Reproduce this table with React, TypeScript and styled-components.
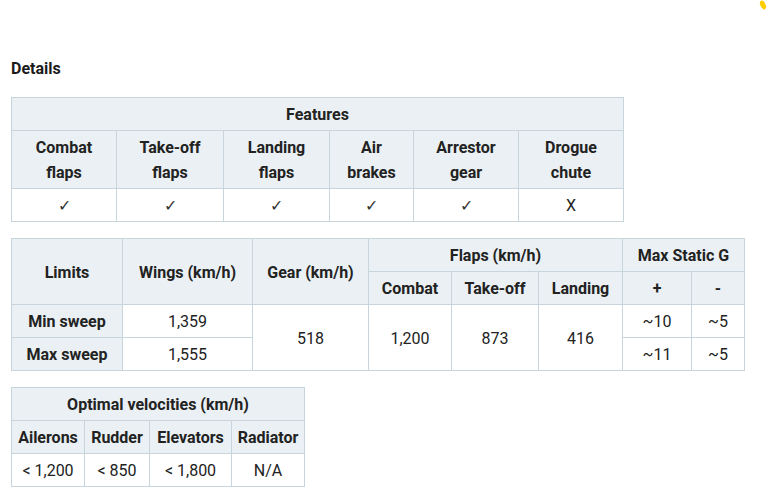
import styled, { createGlobalStyle } from "styled-components";

const GlobalStyle = createGlobalStyle`
  html, body {
    margin: 0;
    padding: 0;
    background: #ffffff;
  }
  body {
    font-family: Roboto, "Liberation Sans", sans-serif;
    color: #222222;
  }
`;

const features = [
  ["Combat", "flaps"],
  ["Take-off", "flaps"],
  ["Landing", "flaps"],
  ["Air", "brakes"],
  ["Arrestor", "gear"],
  ["Drogue", "chute"],
];

const featureValues = ["✓", "✓", "✓", "✓", "✓", "X"];

const velocities = [
  { title: "Ailerons", value: "< 1,200" },
  { title: "Rudder", value: "< 850" },
  { title: "Elevators", value: "< 1,800" },
  { title: "Radiator", value: "N/A" },
];

function App() {
  return (
    <Page>
      <GlobalStyle />
      <Blob viewBox="0 0 10 12" aria-hidden>
        <ellipse cx="5" cy="6" rx="2.6" ry="4.6" transform="rotate(-25 5 6)" fill="#ffcc00" />
      </Blob>
      <Heading>Details</Heading>

      <Table>
        <colgroup>
          {[105, 107, 106, 84, 105, 105].map((w, i) => (
            <col key={i} style={{ width: w }} />
          ))}
        </colgroup>
        <thead>
          <tr>
            <Th colSpan={6}>Features</Th>
          </tr>
          <tr>
            {features.map(([a, b]) => (
              <Th key={a}>
                {a}
                <br />
                {b}
              </Th>
            ))}
          </tr>
        </thead>
        <tbody>
          <tr>
            {featureValues.map((v, i) => (
              <Td key={i} $mark={v === "✓"}>
                {v}
              </Td>
            ))}
          </tr>
        </tbody>
      </Table>

      <Table>
        <colgroup>
          {[111, 130, 116, 83, 87, 84, 69, 53].map((w, i) => (
            <col key={i} style={{ width: w }} />
          ))}
        </colgroup>
        <thead>
          <tr>
            <Th rowSpan={2}>Limits</Th>
            <Th rowSpan={2}>Wings (km/h)</Th>
            <Th rowSpan={2}>Gear (km/h)</Th>
            <Th colSpan={3}>Flaps (km/h)</Th>
            <Th colSpan={2}>Max Static G</Th>
          </tr>
          <tr>
            <Th>Combat</Th>
            <Th>Take-off</Th>
            <Th>Landing</Th>
            <Th>+</Th>
            <Th>-</Th>
          </tr>
        </thead>
        <tbody>
          <tr>
            <Th>Min sweep</Th>
            <Td>1,359</Td>
            <Td rowSpan={2}>518</Td>
            <Td rowSpan={2}>1,200</Td>
            <Td rowSpan={2}>873</Td>
            <Td rowSpan={2}>416</Td>
            <Td>~10</Td>
            <Td>~5</Td>
          </tr>
          <tr>
            <Th>Max sweep</Th>
            <Td>1,555</Td>
            <Td>~11</Td>
            <Td>~5</Td>
          </tr>
        </tbody>
      </Table>

      <Table>
        <colgroup>
          {[73, 65, 82, 73].map((w, i) => (
            <col key={i} style={{ width: w }} />
          ))}
        </colgroup>
        <thead>
          <tr>
            <Th colSpan={4}>Optimal velocities (km/h)</Th>
          </tr>
          <tr>
            {velocities.map((v) => (
              <Th key={v.title}>{v.title}</Th>
            ))}
          </tr>
        </thead>
        <tbody>
          <tr>
            {velocities.map((v) => (
              <Td key={v.title}>{v.value}</Td>
            ))}
          </tr>
        </tbody>
      </Table>
    </Page>
  );
}

const Page = styled.main`
  position: relative;
  width: 770px;
  height: 499px;
  box-sizing: border-box;
  padding: 59px 0 0 11px;
  overflow: hidden;
`;

const Blob = styled.svg`
  position: absolute;
  top: -1px;
  right: 2px;
  width: 10px;
  height: 12px;
`;

const Heading = styled.h3`
  margin: 0 0 18px;
  font-size: 16px;
  font-weight: 700;
  line-height: 20px;
  color: #1b1b1b;
`;

const Table = styled.table`
  border-collapse: collapse;
  table-layout: fixed;
  border: 1px solid #c8d5dc;
  margin: 0 0 16px;
  font-size: 16px;
  line-height: 25px;
  color: #222222;
`;

const Th = styled.th`
  background: #eaf0f3;
  border: 1px solid #c8d5dc;
  padding: 4px 4px 3px;
  font-weight: 700;
  text-align: center;
  vertical-align: middle;
  white-space: nowrap;
`;

const Td = styled.td<{ $mark?: boolean }>`
  background: #ffffff;
  border: 1px solid #c8d5dc;
  padding: 4px 4px 3px;
  font-weight: ${(p) => (p.$mark ? 200 : 400)};
  text-align: center;
  vertical-align: middle;
  white-space: nowrap;
  font-family: ${(p) => (p.$mark ? '"DejaVu Sans", Roboto, sans-serif' : "inherit")};
  font-size: 16px;
  color: ${(p) => (p.$mark ? "#333333" : "#222222")};
`;

export default App;
